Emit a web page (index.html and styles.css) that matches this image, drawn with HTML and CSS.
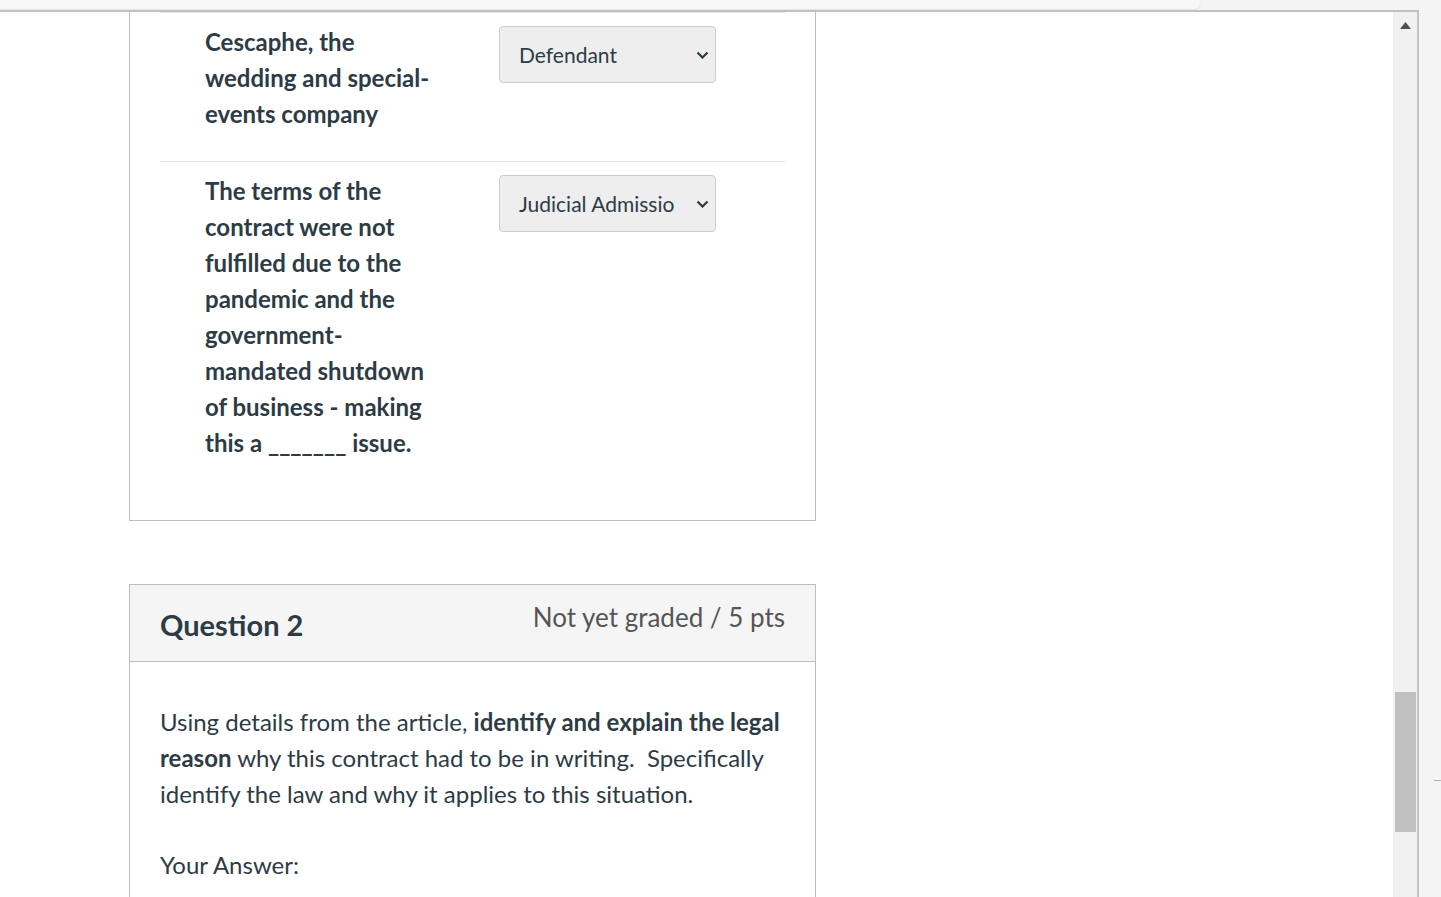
FILE: index.html
```html
<!DOCTYPE html>
<html>
	<head>
		<meta charset="utf-8">
		<title>Quiz submission</title>
		<link rel="stylesheet" href="styles.css">
	</head>
	<body>
		<div class=top>
			<div class=tab></div>
		</div>
		<div class=main>
			<div class=frame>
				<div class=content>
					<div class="question partial">
						<div class=answers>
							<div class=row>
								<div class=answerText>Cescaphe, the wedding and special-events company</div>
								<div class=select>
									<span class=value>Defendant</span>
									<svg class=chevron width="13" height="8" viewBox="0 0 13 8"><path d="M1.5 1.5 L6.5 6.5 L11.5 1.5" fill="none" stroke="#2d3b45" stroke-width="2.2"/></svg>
								</div>
							</div>
							<div class=row>
								<div class=answerText>The terms of the contract were not fulfilled due to the pandemic and the government-mandated shutdown of business - making this a _______ issue.</div>
								<div class=select>
									<span class=value>Judicial Admission</span>
									<svg class=chevron width="13" height="8" viewBox="0 0 13 8"><path d="M1.5 1.5 L6.5 6.5 L11.5 1.5" fill="none" stroke="#2d3b45" stroke-width="2.2"/></svg>
								</div>
							</div>
						</div>
					</div>
					<div class="question second">
						<div class=header>
							<h2 class=name>Question 2</h2>
							<span class=points>Not yet graded / 5 pts</span>
						</div>
						<div class=body>
							<p>Using details from the article, <b>identify and explain the legal reason</b> why this contract had to be in writing.&nbsp; Specifically identify the law and why it applies to this situation.</p>
							<div class=yourAnswer>Your Answer:</div>
						</div>
					</div>
				</div>
				<div class=scrollbar>
					<svg class=arrow width="11" height="7" viewBox="0 0 11 7"><path d="M5.5 0 L11 7 L0 7 Z" fill="#505050"/></svg>
					<div class=thumb></div>
				</div>
			</div>
			<div class=gutter>
				<div class=mark></div>
			</div>
		</div>
	</body>
</html>
```

FILE: styles.css
```css
body {
	margin: 0;
	height: 897px;
	overflow: hidden;
	background-color: #f4f4f4;
	font-family: Lato, 'Liberation Sans', sans-serif;
	color: #2d3b45;
}

.top {
	height: 10px;
}

.tab {
	width: 1200px;
	height: 9px;
	background-color: #f8f8f8;
	border-bottom-right-radius: 6px;
	box-shadow: 0 1px 2px rgba(0, 0, 0, 0.08);
}

.main {
	display: flex;
	height: 887px;
}

.frame {
	width: 1419px;
	box-sizing: border-box;
	display: flex;
	border-top: 2px solid #c2c2c2;
	border-right: 2px solid #c2c2c2;
}

.content {
	flex: 1;
	overflow: hidden;
	background-color: white;
	padding-left: 129px;
}

.question {
	width: 687px;
	box-sizing: border-box;
	border: 1px solid #bdbdbd;
}

.question.partial {
	border-top: none;
}

.answers {
	padding-bottom: 30px;
}

.row {
	display: flex;
	align-items: flex-start;
	margin: 0 30px;
	padding: 11px 0 29px 45px;
	border-top: 1px solid #e4e4e4;
}

.answerText {
	width: 234px;
	font-size: 24px;
	font-weight: bold;
	line-height: 36px;
}

.select {
	display: flex;
	align-items: center;
	width: 217px;
	height: 57px;
	box-sizing: border-box;
	margin: 2px 0 0 60px;
	padding: 0 6px 0 19px;
	background-color: #eeeeee;
	border: 1px solid #c9cdd1;
	border-radius: 4px;
	font-size: 21px;
}

.value {
	flex: 1;
	overflow: hidden;
	white-space: nowrap;
	margin-right: 22px;
}

.chevron {
	flex: none;
	margin-top: 1px;
}

.question.second {
	margin-top: 63px;
}

.header {
	display: flex;
	justify-content: space-between;
	align-items: flex-start;
	padding: 14px 30px 18px;
	background-color: #f5f5f5;
	border-bottom: 1px solid #bdbdbd;
}

.name {
	margin: 8px 0 0;
	font-size: 29px;
	font-weight: bold;
	line-height: 36px;
}

.points {
	font-size: 26px;
	line-height: 36px;
	color: #555555;
}

.body {
	padding: 42px 30px 40px;
	font-size: 24px;
	line-height: 36px;
}

.body p {
	margin: 0 0 35px;
}

.scrollbar {
	width: 24px;
	background-color: #f1f1f1;
	display: flex;
	flex-direction: column;
	align-items: center;
}

.arrow {
	margin-top: 10px;
}

.thumb {
	width: 21px;
	height: 140px;
	margin-top: 663px;
	background-color: #c1c1c1;
}

.gutter {
	flex: 1;
	display: flex;
	flex-direction: column;
	align-items: flex-end;
}

.mark {
	width: 7px;
	height: 1px;
	margin-top: 770px;
	background-color: #b4b4b4;
}
```
